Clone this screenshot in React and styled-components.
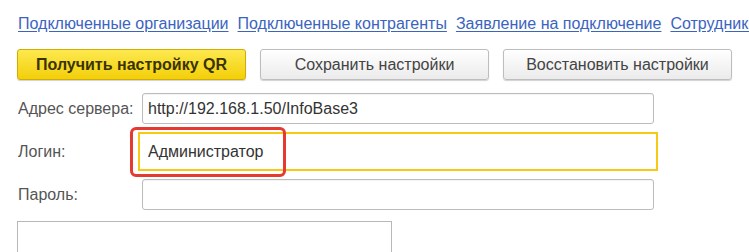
import React from "react";
import styled, { createGlobalStyle } from "styled-components";

const Global = createGlobalStyle`
  html, body { margin: 0; padding: 0; background: #fff; overflow: hidden; }
  body { font-family: "Liberation Sans", Arial, sans-serif; }
`;

const Page = styled.div`
  width: 749px;
  height: 252px;
  overflow: hidden;
  padding: 15px 0 0 17px;
  box-sizing: border-box;
  display: flex;
  flex-direction: column;
  & > * { flex-shrink: 0; }
`;

const LinkBar = styled.nav`
  display: flex;
  gap: 9px;
  white-space: nowrap;
  overflow: hidden;
  padding-left: 1px;
  height: 22px;
`;

const NavLink = styled.a`
  font-size: 16px;
  line-height: 18px;
  color: #3a64c0;
  text-decoration: underline;
  text-underline-offset: 2px;
  cursor: pointer;
  flex-shrink: 0;
`;

const Toolbar = styled.div`
  display: flex;
  gap: 14px;
  margin-top: 12px;
`;

const Button = styled.button`
  width: 229px;
  height: 31px;
  box-sizing: border-box;
  border-radius: 3px;
  font-family: "Liberation Sans", Arial, sans-serif;
  font-size: 16px;
  color: ${(p) => (p.$primary ? "#3a3300" : "#444")};
  font-weight: ${(p) => (p.$primary ? 700 : 400)};
  border: 1px solid ${(p) => (p.$primary ? "#d2ad00" : "#bdbdbd")};
  background: ${(p) =>
    p.$primary
      ? "linear-gradient(#fde94f, #f3cf0a)"
      : "linear-gradient(#ffffff, #ebebeb)"};
  box-shadow: 0 1px 1px rgba(0, 0, 0, 0.18);
  padding: 0;
`;

const Form = styled.div`
  display: flex;
  flex-direction: column;
  gap: 12px;
  margin-top: 13px;
`;

const Row = styled.div`
  position: relative;
  display: grid;
  grid-template-columns: 125px 512px;
  align-items: center;
  height: 31px;
`;

const Label = styled.label`
  font-size: 16px;
  color: #555;
  padding-left: 1px;
`;

const Input = styled.div`
  height: 31px;
  box-sizing: border-box;
  border: 1px solid ${(p) => (p.$focused ? "transparent" : "#bcbcbc")};
  border-radius: ${(p) => (p.$focused ? "0" : "3px")};
  padding: 0 5px;
  display: flex;
  align-items: center;
  font-size: 16px;
  color: #333;
  background: #fff;
  box-shadow: ${(p) =>
    p.$focused
      ? "0 0 0 2px #fff, 0 0 0 4px #f8c914"
      : "inset 0 1px 1px rgba(0,0,0,0.05)"};
`;

const Highlight = styled.div`
  position: absolute;
  left: 113px;
  top: -9px;
  width: 156px;
  height: 50px;
  box-sizing: border-box;
  border: 3px solid #e53a2f;
  border-radius: 6px;
  pointer-events: none;
`;

const Panel = styled.div`
  margin-top: 11px;
  width: 375px;
  height: 60px;
  box-sizing: border-box;
  border: 1px solid #b8b8b8;
`;

export default function App() {
  return (
    <>
      <Global />
      <Page>
        <LinkBar>
          <NavLink>Подключенные организации</NavLink>
          <NavLink>Подключенные контрагенты</NavLink>
          <NavLink>Заявление на подключение</NavLink>
          <NavLink>Сотрудники</NavLink>
        </LinkBar>
        <Toolbar>
          <Button $primary>Получить настройку QR</Button>
          <Button>Сохранить настройки</Button>
          <Button>Восстановить настройки</Button>
        </Toolbar>
        <Form>
          <Row>
            <Label>Адрес сервера:</Label>
            <Input>http://192.168.1.50/InfoBase3</Input>
          </Row>
          <Row>
            <Label>Логин:</Label>
            <Input $focused>Администратор</Input>
            <Highlight />
          </Row>
          <Row>
            <Label>Пароль:</Label>
            <Input />
          </Row>
        </Form>
        <Panel />
      </Page>
    </>
  );
}
